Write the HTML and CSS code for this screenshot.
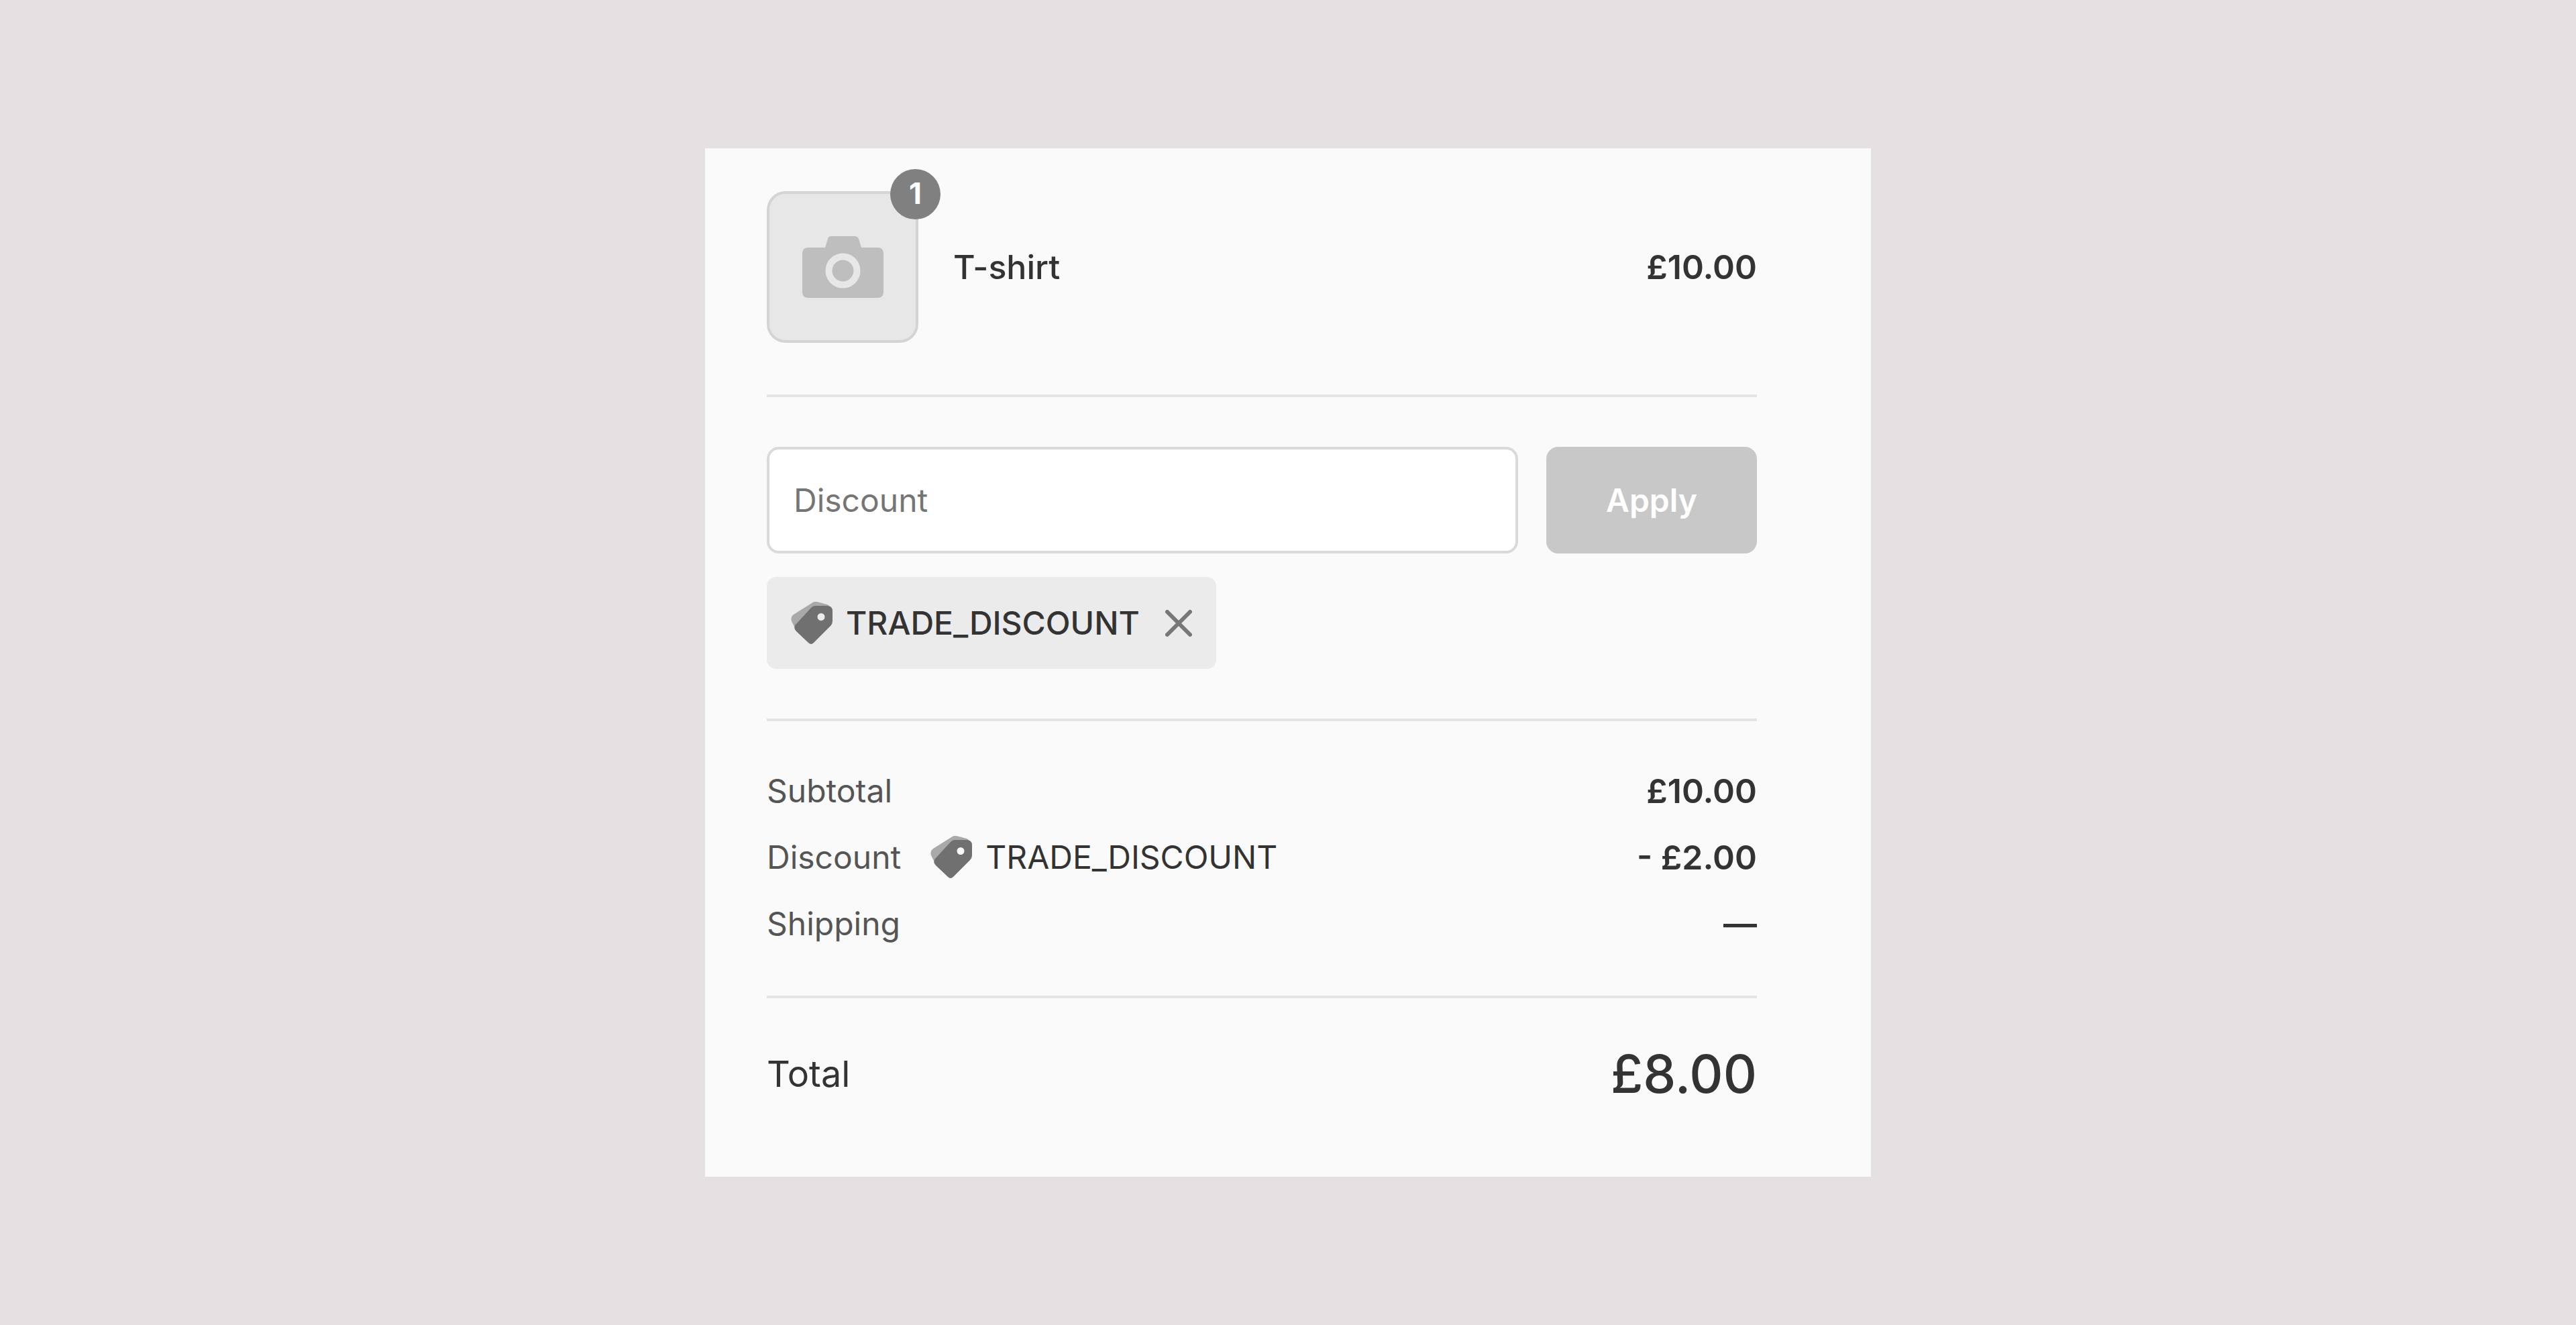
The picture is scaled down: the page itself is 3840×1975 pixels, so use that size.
FILE: index.html
```html
<!DOCTYPE html>
<html lang="en">
<head>
    <meta charset="UTF-8">
    <meta name="viewport" content="width=device-width, initial-scale=1.0">
    <title>Order Summary</title>
    <link rel="stylesheet" href="styles.css">
</head>
<body>

    <!-- Shared tag icon -->
    <svg class="sprite" aria-hidden="true">
        <symbol id="tag" viewBox="0 0 64 64">
            <path fill="#a9a9a9" d="M1 29Q-1 23 4 19L31 2Q35 -1 39 0L54 4Q57 5 58 8L36 12L9 40L5 37Z"/>
            <path fill="#707070" fill-rule="evenodd" d="M36 6H54Q62 6 62 14V29Q62 33 59 36L34 61Q30 65 26 61L8 44Q3 39 7 34L30 9Q33 6 36 6ZM45 17A5.500 5.500 0 1 0 45 28A5.500 5.500 0 1 0 45 17Z"/>
        </symbol>
    </svg>

    <main class="summary">
        <section class="item">
            <div class="thumbnail">
                <svg class="camera" viewBox="0 0 121 92" aria-hidden="true">
                    <path fill="#bebebe" d="M43 0H78Q82 0 84 4L88 17H112Q121 17 121 26V83Q121 92 112 92H9Q0 92 0 83V26Q0 17 9 17H34L38 4Q39 0 43 0Z"/>
                    <circle cx="60.500" cy="51.500" r="21" fill="none" stroke="#e7e7e7" stroke-width="10"/>
                </svg>
                <span class="quantity">1</span>
            </div>
            <span class="name">T-shirt</span>
            <span class="price">£10.00</span>
        </section>

        <section class="discount">
            <form class="discount-form">
                <input type="text" name="discount" placeholder="Discount" aria-label="Discount">
                <button type="submit" class="apply">Apply</button>
            </form>
            <div class="chip">
                <svg class="tag" aria-hidden="true"><use href="#tag"/></svg>
                <span class="code">TRADE_DISCOUNT</span>
                <button type="button" class="remove" aria-label="Remove discount">
                    <svg viewBox="0 0 40 40" aria-hidden="true">
                        <path d="M3 3L37 37M37 3L3 37" stroke="#777" stroke-width="6" stroke-linecap="round"/>
                    </svg>
                </button>
            </div>
        </section>

        <table class="costs">
            <tbody>
                <tr>
                    <th scope="row">Subtotal</th>
                    <td>£10.00</td>
                </tr>
                <tr>
                    <th scope="row">
                        <div class="label">
                            Discount
                            <svg class="tag" aria-hidden="true"><use href="#tag"/></svg>
                            <span class="applied">TRADE_DISCOUNT</span>
                        </div>
                    </th>
                    <td>- £2.00</td>
                </tr>
                <tr>
                    <th scope="row">Shipping</th>
                    <td>—</td>
                </tr>
            </tbody>
        </table>

        <section class="total">
            <span>Total</span>
            <span class="amount">£8.00</span>
        </section>
    </main>

</body>
</html>
```

FILE: styles.css
```css
* {
    box-sizing: border-box;
}
body {
    font-family: Inter, "Liberation Sans", sans-serif;
    font-size: 48px;
    margin: 0;
    background-color: #e5e1e2;
    color: #333;
    display: flex;
    justify-content: center;
    align-items: center;
    min-height: 100vh;
}
.sprite {
    display: none;
}
.summary {
    width: 100%;
    max-width: 1738px;
    padding: 64px 170px 93px 92px;
    background-color: #fafafa;
}
.item {
    display: flex;
    align-items: center;
    padding-bottom: 77px;
    border-bottom: 4px solid #e4e4e4;
    font-size: 50px;
    font-weight: 500;
}
.thumbnail {
    position: relative;
    display: flex;
    justify-content: center;
    align-items: center;
    width: 226px;
    height: 226px;
    margin-right: 52px;
    background-color: #e7e7e7;
    border: 4px solid #d4d4d4;
    border-radius: 28px;
}
.camera {
    width: 121px;
    height: 92px;
}
.quantity {
    position: absolute;
    top: -37px;
    right: -37px;
    width: 75px;
    height: 75px;
    border-radius: 50%;
    background-color: #808080;
    color: white;
    font-size: 44px;
    font-weight: 700;
    line-height: 72px;
    text-align: center;
}
.price {
    margin-left: auto;
    font-weight: 600;
}
.discount {
    padding: 74px 0;
    border-bottom: 4px solid #e4e4e4;
}
.discount-form {
    display: flex;
    gap: 42px;
    margin-bottom: 35px;
}
.discount-form input {
    flex: 1;
    min-width: 0;
    height: 159px;
    padding: 0 36px;
    border: 4px solid #dadada;
    border-radius: 18px;
    background-color: white;
    color: #333;
    font: inherit;
}
.discount-form input::placeholder {
    color: #757575;
    opacity: 1;
}
.apply {
    width: 314px;
    border: none;
    border-radius: 18px;
    background-color: #c8c8c8;
    color: white;
    font: inherit;
    font-weight: 600;
}
.chip {
    display: inline-flex;
    align-items: center;
    height: 137px;
    padding: 0 36px;
    border-radius: 14px;
    background-color: #ebebeb;
    vertical-align: top;
}
.tag {
    flex: none;
    width: 64px;
    height: 64px;
}
.code {
    margin: 0 38px 0 18px;
    font-weight: 500;
}
.remove {
    width: 40px;
    height: 40px;
    padding: 0;
    border: none;
    background: none;
}
.remove svg {
    display: block;
}
.costs {
    width: 100%;
    padding: 54px 0 58px;
    border-bottom: 4px solid #e4e4e4;
    border-spacing: 0;
}
.costs th, .costs td {
    height: 99px;
    padding: 0;
}
.costs th {
    color: #555;
    font-weight: 400;
    text-align: left;
}
.costs td {
    font-size: 50px;
    font-weight: 600;
    text-align: right;
}
.label {
    display: flex;
    align-items: center;
}
.label .tag {
    margin: 0 18px 0 44px;
}
.applied {
    color: #333;
}
.total {
    display: flex;
    justify-content: space-between;
    align-items: center;
    padding-top: 53px;
    font-size: 54px;
    line-height: 120px;
}
.amount {
    font-size: 78px;
    font-weight: 500;
}
```
